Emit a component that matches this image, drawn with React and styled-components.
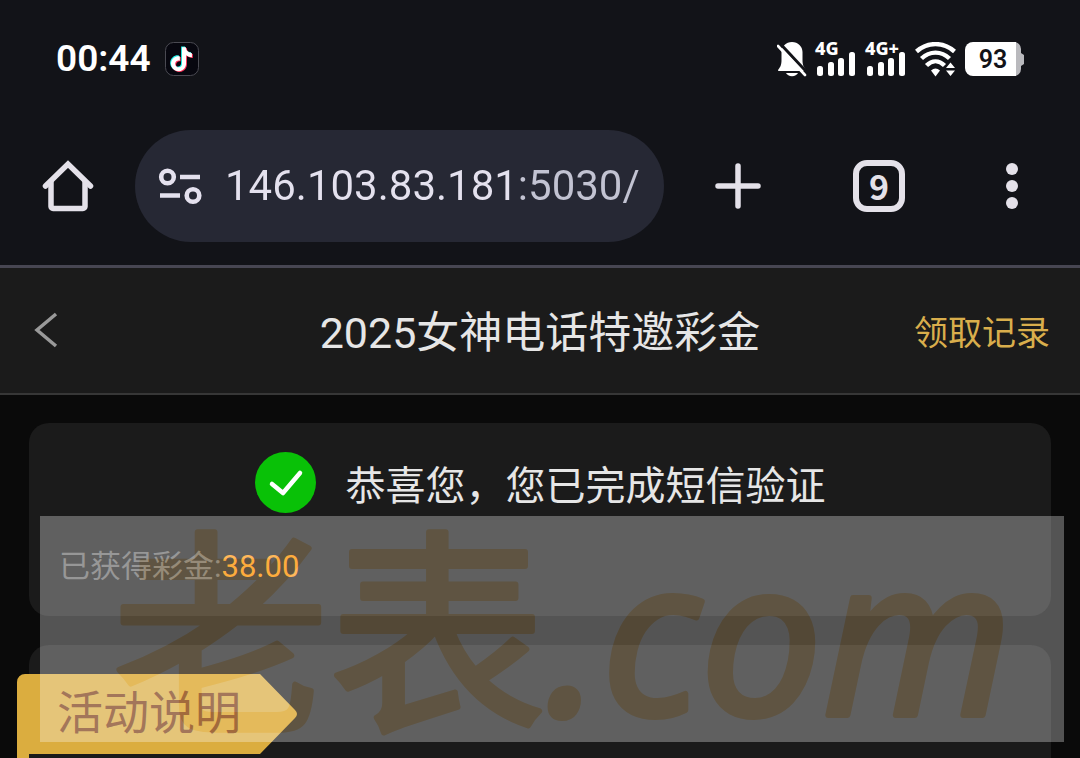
import styled, { createGlobalStyle } from "styled-components";

const GlobalStyle = createGlobalStyle`
  * {
    box-sizing: border-box;
  }

  body {
    margin: 0;
    background: #0a0a0a;
    font-family: Roboto, "Noto Sans CJK SC", sans-serif;
  }

  button {
    padding: 0;
    border: 0;
    background: none;
    color: inherit;
    font: inherit;
  }

  svg {
    display: block;
  }
`;

const Page = styled.div`
  display: flex;
  flex-direction: column;
  min-height: 100vh;
  background: #0a0a0a;
`;

const StatusBar = styled.div`
  display: flex;
  align-items: center;
  justify-content: space-between;
  height: 118px;
  padding: 0 56px;
  background: #121318;
  color: #fff;
`;

const StatusGroup = styled.div`
  display: flex;
  align-items: center;
  gap: ${(props) => props.$gap}px;
`;

const Clock = styled.time`
  font-size: 37px;
  line-height: 44px;
  font-weight: 600;
`;

const Toolbar = styled.div`
  display: flex;
  align-items: center;
  height: 150px;
  padding: 0 50px 12px 42px;
  background: #121318;
  border-bottom: 3px solid #474652;
`;

const ToolButton = styled.button`
  display: flex;
  align-items: center;
  justify-content: center;
  width: ${(props) => props.$width || 52}px;
  height: 52px;
  color: #e4e1e9;
`;

const Omnibox = styled.label`
  display: flex;
  flex: 1;
  align-items: center;
  gap: 22px;
  min-width: 0;
  height: 112px;
  margin: 0 48px 0 41px;
  padding: 0 22px;
  border-radius: 56px;
  background: #262834;
`;

/* the port and path are drawn dimmer than the host */
const Address = styled.input`
  flex: 1;
  min-width: 0;
  padding: 0;
  border: 0;
  outline: 0;
  background: linear-gradient(to right, #e4e1ee 292px, #c2c3d2 292px);
  background-clip: text;
  color: transparent;
  font-family: Roboto, sans-serif;
  font-size: 42px;
  line-height: 56px;
`;

const Actions = styled.div`
  display: flex;
  gap: 89px;
`;

const TabCount = styled.span`
  display: flex;
  align-items: center;
  justify-content: center;
  width: 52px;
  height: 52px;
  border: 6px solid #e4e1e9;
  border-radius: 14px;
  font-family: "Noto Sans CJK SC", sans-serif;
  font-size: 34px;
  line-height: 40px;
  font-weight: 700;
`;

const Header = styled.header`
  display: grid;
  grid-template-columns: 1fr auto 1fr;
  align-items: center;
  height: 127px;
  padding: 0 30px;
  background: #1b1b1b;
  border-bottom: 2px solid #373737;
`;

const BackButton = styled.button`
  justify-self: start;
  width: 32px;
  height: 40px;
  color: #999;
`;

const Title = styled.h1`
  margin: 0;
  padding-top: 4px;
  color: #e6e6e6;
  font-size: 43px;
  line-height: 60px;
  font-weight: 400;
`;

const RecordLink = styled.a`
  justify-self: end;
  padding-top: 4px;
  color: #d9ae4c;
  font-size: 34px;
  line-height: 50px;
  text-decoration: none;
`;

const Content = styled.main`
  position: relative;
  display: flex;
  flex: 1;
  flex-direction: column;
  gap: 29px;
  padding: 28px 29px 0;
`;

const ResultCard = styled.section`
  height: 193px;
  padding: 29px 30px;
  border-radius: 20px;
  background: #1b1b1b;
`;

const Result = styled.div`
  display: flex;
  align-items: center;
  justify-content: center;
  gap: 30px;
  height: 61px;
`;

const ResultText = styled.strong`
  padding-top: 8px;
  color: #e6e6e6;
  font-size: 40px;
  line-height: 60px;
  font-weight: 400;
`;

const Amount = styled.p`
  margin: 30px 0 0;
  color: #6a6a6a;
  font-size: 31px;
  line-height: 48px;
`;

const AmountValue = styled.span`
  color: #ff9a14;
`;

const RulesCard = styled.section`
  flex: 1;
  padding-top: 29px;
  border-radius: 20px 20px 0 0;
  background: #1b1b1b;
`;

const Ribbon = styled.h2`
  position: relative;
  width: 280px;
  height: 84px;
  margin: 0 0 0 -12px;
  padding-left: 40px;
  color: #7b3a12;
  font-size: 46px;
  line-height: 78px;
  font-weight: 400;
`;

const RibbonShape = styled.svg`
  position: absolute;
  top: 0;
  left: 0;
`;

const RibbonText = styled.span`
  position: relative;
`;

const Watermark = styled.div`
  position: absolute;
  top: 121px;
  right: 16px;
  left: 40px;
  height: 226px;
  background: #fff;
  opacity: 0.3;
  pointer-events: none;
`;

const WatermarkLogo = styled.svg`
  width: 100%;
  height: 100%;
  fill: #fbd89c;
  stroke: #fbd89c;
  stroke-width: 6px;
  stroke-linejoin: round;
  font-family: "Noto Sans", "Noto Sans CJK SC", sans-serif;
  font-size: 217px;
`;

const notePath =
  "M12.525.02c1.31-.02 2.61-.01 3.91-.02.08 1.53.63 3.09 1.75 4.17 1.12 1.11 2.7 1.62 4.24 1.79v4.03c-1.44-.05-2.89-.35-4.2-.97-.57-.26-1.1-.59-1.62-.93-.01 2.92.01 5.84-.02 8.75-.08 1.4-.54 2.79-1.35 3.94-1.31 1.92-3.58 3.17-5.91 3.21-1.43.08-2.86-.31-4.08-1.03-2.02-1.19-3.44-3.37-3.65-5.71-.02-.5-.03-1-.01-1.49.18-1.9 1.12-3.72 2.58-4.96 1.66-1.44 3.98-2.13 6.15-1.72.02 1.48-.04 2.96-.04 4.44-.99-.32-2.15-.23-3.02.37-.63.41-1.11 1.04-1.36 1.75-.21.51-.15 1.07-.14 1.61.24 1.64 1.82 3.02 3.5 2.87 1.12-.01 2.19-.66 2.77-1.61.19-.33.4-.67.41-1.06.1-1.79.06-3.57.07-5.36.01-4.03-.01-8.05.02-12.07z";

function TikTokIcon() {
  return (
    <svg width="34" height="34" viewBox="0 0 34 34">
      <rect x="0.5" y="0.5" width="33" height="33" rx="8" fill="#07070f" stroke="#4a4a52" />
      <path d={notePath} fill="#25f4ee" transform="translate(3.6 4.4)" />
      <path d={notePath} fill="#fe2c55" transform="translate(5.4 6)" />
      <path d={notePath} fill="#fff" transform="translate(4.5 5.2)" />
    </svg>
  );
}

function MutedBellIcon() {
  return (
    <svg width="30" height="35" viewBox="0 0 30 35">
      <path
        d="M15 0C21 0 25.500 4.500 25.500 10v8c0 5 1.200 7 3 9.200.8.900.5 1.800-.6 1.800H2.100c-1.100 0-1.400-.9-.6-1.800C3.300 25 4.500 23 4.500 18v-8C4.500 4.500 9 0 15 0z"
        fill="#fff"
      />
      <path d="M9 31h12c-1 2-3.200 3.200-6 3.200S10 33 9 31z" fill="#fff" />
      <path d="M3.500 2l28 30" stroke="#121318" strokeWidth="3" />
      <path d="M1 4l27 29" stroke="#fff" strokeWidth="2.600" strokeLinecap="round" />
    </svg>
  );
}

function SignalIcon({ label }) {
  return (
    <svg width="42" height="35" viewBox="0 0 42 35" overflow="visible">
      <text x="0" y="13" fill="#fff" fontFamily="Noto Sans, sans-serif" fontSize="18" fontWeight="800">
        {label}
      </text>
      <g fill="#fff">
        <rect x="2" y="24" width="6" height="10" rx="2.500" />
        <rect x="13" y="20" width="6" height="14" rx="2.500" />
        <rect x="23" y="16" width="6" height="18" rx="2.500" />
        <rect x="34" y="10" width="6" height="24" rx="2.500" />
      </g>
    </svg>
  );
}

function WifiIcon() {
  return (
    <svg width="42" height="35" viewBox="0 0 42 35">
      <g fill="none" stroke="#fff" strokeWidth="4.400">
        <path d="M1.500 9.500C12.500-.4 28.500-.4 39.500 9.500" />
        <path d="M6.500 16.500C14.700 8.600 26.300 8.600 34.500 16.500" />
        <path d="M11.500 23.500C17 18 24 18 29.500 23.500" />
      </g>
      <path d="M16 28.500q4.500-4 9 0l-4.500 6z" fill="#fff" />
      <path d="M31 26l4.500-5.500 4.500 5.500zM31 28.500l4.500 5.500 4.500-5.500z" fill="#fff" />
    </svg>
  );
}

function BatteryIcon() {
  return (
    <svg width="59" height="34" viewBox="0 0 59 34">
      <path d="M48 0h1a7 7 0 0 1 7 7v4l3 2v9l-3 2v3a7 7 0 0 1-7 7h-1z" fill="#b9b9bd" />
      <path d="M8 0h43v34H8a8 8 0 0 1-8-8V8a8 8 0 0 1 8-8z" fill="#fff" />
      <text
        x="28"
        y="26"
        fill="#121318"
        fontFamily="Roboto, sans-serif"
        fontSize="25"
        fontWeight="600"
        textAnchor="middle"
      >
        93
      </text>
    </svg>
  );
}

function HomeIcon() {
  return (
    <svg width="52" height="52" viewBox="0 0 52 52" fill="none" stroke="currentColor" strokeWidth="5.500">
      <path d="M3.500 26L26 4l22.500 22" strokeLinecap="round" />
      <path d="M9 21v25.500a2 2 0 0 0 2 2h30a2 2 0 0 0 2-2V21" />
    </svg>
  );
}

function SiteInfoIcon() {
  return (
    <svg width="46" height="38" viewBox="0 0 46 38" fill="none" stroke="#e4e1ee" strokeWidth="4.600">
      <circle cx="10.500" cy="10" r="6.300" />
      <path d="M23 10h20M3 28.500h20" />
      <circle cx="36" cy="28.500" r="6.300" />
    </svg>
  );
}

function PlusIcon() {
  return (
    <svg width="46" height="46" viewBox="0 0 46 46" stroke="currentColor" strokeWidth="5.500" strokeLinecap="round">
      <path d="M23 3v40M3 23h40" />
    </svg>
  );
}

function DotsIcon() {
  return (
    <svg width="12" height="46" viewBox="0 0 12 46" fill="currentColor">
      <circle cx="6" cy="6" r="6" />
      <circle cx="6" cy="23" r="6" />
      <circle cx="6" cy="40" r="6" />
    </svg>
  );
}

function BackIcon() {
  return (
    <svg width="32" height="40" viewBox="0 0 32 40" fill="none" stroke="currentColor" strokeWidth="3.500">
      <path d="M26 3L7 19l19 16" />
    </svg>
  );
}

function SuccessIcon() {
  return (
    <svg width="61" height="61" viewBox="0 0 61 61">
      <circle cx="30.500" cy="30.500" r="30.500" fill="#09c107" />
      <path
        d="M17 32l11 9 17-20"
        fill="none"
        stroke="#fff"
        strokeWidth="4.500"
        strokeLinecap="round"
        strokeLinejoin="round"
      />
    </svg>
  );
}

function App() {
  return (
    <Page>
      <GlobalStyle />
      <StatusBar>
        <StatusGroup $gap={14}>
          <Clock>00:44</Clock>
          <TikTokIcon />
        </StatusGroup>
        <StatusGroup $gap={8}>
          <MutedBellIcon />
          <SignalIcon label="4G" />
          <SignalIcon label="4G+" />
          <WifiIcon />
          <BatteryIcon />
        </StatusGroup>
      </StatusBar>

      <Toolbar>
        <ToolButton aria-label="Home">
          <HomeIcon />
        </ToolButton>
        <Omnibox>
          <SiteInfoIcon />
          <Address aria-label="Address" defaultValue="146.103.83.181:5030/" />
        </Omnibox>
        <Actions>
          <ToolButton aria-label="New tab">
            <PlusIcon />
          </ToolButton>
          <ToolButton>
            <TabCount>9</TabCount>
          </ToolButton>
          <ToolButton aria-label="Menu" $width={36}>
            <DotsIcon />
          </ToolButton>
        </Actions>
      </Toolbar>

      <Header>
        <BackButton aria-label="Back">
          <BackIcon />
        </BackButton>
        <Title>2025女神电话特邀彩金</Title>
        <RecordLink href="#records">领取记录</RecordLink>
      </Header>

      <Content>
        <ResultCard>
          <Result>
            <SuccessIcon />
            <ResultText>恭喜您，您已完成短信验证</ResultText>
          </Result>
          <Amount>
            已获得彩金:<AmountValue>38.00</AmountValue>
          </Amount>
        </ResultCard>

        <RulesCard>
          <Ribbon>
            <RibbonShape width="280" height="84" viewBox="0 0 280 84">
              <path
                d="M8 0h235l35 36q4 4 0 8l-35 36H12v4H0V8a8 8 0 0 1 8-8z"
                fill="#dbad3f"
              />
            </RibbonShape>
            <RibbonText>活动说明</RibbonText>
          </Ribbon>
        </RulesCard>

        <Watermark>
          <WatermarkLogo>
            <text x="51%" y="199" textAnchor="middle">
              老表<tspan fontStyle="italic">.com</tspan>
            </text>
          </WatermarkLogo>
        </Watermark>
      </Content>
    </Page>
  );
}

export default App;
